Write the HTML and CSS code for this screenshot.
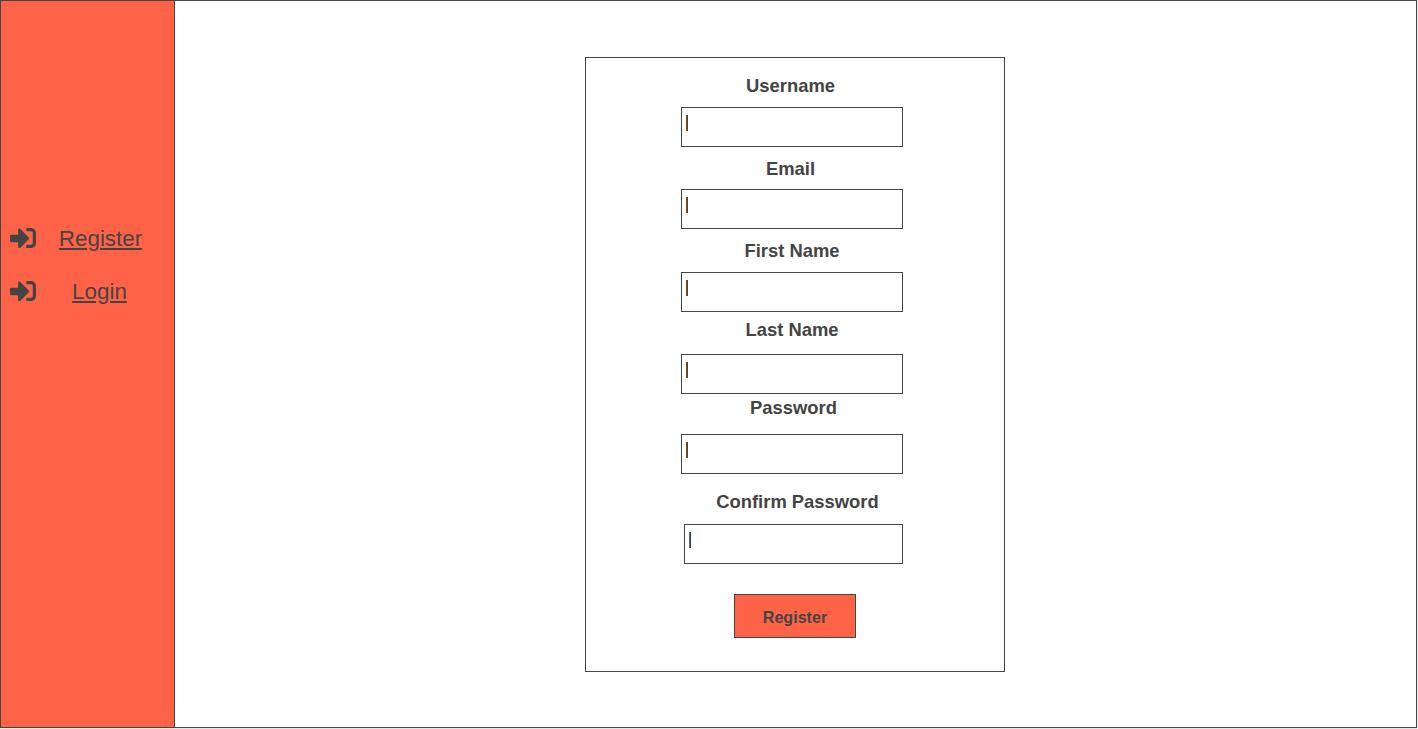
FILE: index.html
```
<!DOCTYPE html>
<html lang="en">
<head>
<meta charset="utf-8">
<title>Register</title>
<link rel="stylesheet" href="styles.css">
</head>
<body>
<svg class="sprite" aria-hidden="true">
  <symbol id="sign-in" viewBox="0 64 512 384" preserveAspectRatio="none"><path d="M416 448h-84c-6.600 0-12-5.400-12-12v-40c0-6.600 5.400-12 12-12h84c17.700 0 32-14.300 32-32V160c0-17.700-14.300-32-32-32h-84c-6.600 0-12-5.400-12-12V76c0-6.600 5.400-12 12-12h84c53 0 96 43 96 96v192c0 53-43 96-96 96zm-47-201L201 79c-15-15-41-4.500-41 17v96H24c-13.300 0-24 10.700-24 24v96c0 13.300 10.700 24 24 24h136v96c0 21.500 26 32 41 17l168-168c9.300-9.400 9.300-24.600 0-34z"/></symbol>
</svg>
<div class="frame">
  <nav class="sidebar">
    <div class="nav-item"><svg class="icon"><use href="#sign-in"/></svg><a class="link" href="#">Register</a></div>
    <div class="nav-item login"><svg class="icon"><use href="#sign-in"/></svg><a class="link" href="#">Login</a></div>
  </nav>
  <main class="content">
    <form class="card">
      <div class="field username"><label class="label">Username</label><div class="input"><span class="caret"></span></div></div>
      <div class="field email"><label class="label">Email</label><div class="input"><span class="caret"></span></div></div>
      <div class="field first-name"><label class="label">First Name</label><div class="input"><span class="caret"></span></div></div>
      <div class="field last-name"><label class="label">Last Name</label><div class="input"><span class="caret"></span></div></div>
      <div class="field password"><label class="label">Password</label><div class="input"><span class="caret"></span></div></div>
      <div class="field confirm"><label class="label">Confirm Password</label><div class="input"><span class="caret"></span></div></div>
      <button class="submit" type="button">Register</button>
    </form>
  </main>
</div>
</body>
</html>
```
FILE: styles.css
```
* { box-sizing: border-box; }
body {
  margin: 0;
  height: 729px;
  overflow: hidden;
  background: #fff;
  color: #444;
  font-family: "Liberation Sans", Arial, sans-serif;
}
.sprite { display: none; }
.frame {
  display: flex;
  width: 1417px;
  height: 728px;
  border: 1px solid #444;
  box-shadow: 0 1px 0 #e6e6e6, 1px 0 0 #f0f0f0;
}
.sidebar {
  width: 174px;
  padding-top: 211px;
  border-right: 1px solid #444;
  background: #ff6347;
}
.nav-item {
  display: flex;
  align-items: center;
  height: 53px;
  padding-left: 9px;
}
.icon { width: 26px; height: 20px; margin-bottom: 1px; fill: #444; }
.link {
  width: 129px;
  color: #444;
  font-size: 22.4px;
  line-height: 26px;
  text-align: center;
}
.login .link { width: 127px; }
.content { flex: 1; padding: 56px 0 0 410px; }
.card {
  width: 420px;
  height: 615px;
  padding: 17px 101px 0 95px;
  border: 1px solid #444;
}
.field { display: flex; flex-direction: column; align-items: flex-end; }
.label {
  align-self: center;
  font-size: 18.4px;
  font-weight: bold;
  line-height: 22px;
  white-space: nowrap;
}
.input {
  width: 222px;
  height: 40px;
  padding: 7px 4px;
  border: 1px solid #444;
}
.caret {
  display: block;
  width: 2px;
  height: 16px;
  background: linear-gradient(90deg, #a04a00 50%, #444 50%);
}
.username { gap: 10px; }
.username .label, .email .label { margin-right: 3px; }
.email { margin-top: 11px; gap: 9px; }
.first-name { margin-top: 11px; gap: 10px; }
.last-name { margin-top: 7px; gap: 13px; }
.password { margin-top: 3px; gap: 15px; }
.password .label { margin-left: 3px; }
.confirm { margin-top: 17px; gap: 11px; }
.confirm .label { margin-left: 11px; }
.confirm .input { width: 219px; }
.confirm .caret { background: linear-gradient(90deg, #8a6238 50%, #004a9f 50%); }
.submit {
  display: block;
  width: 122px;
  height: 44px;
  margin: 30px 0 0 53px;
  padding: 3px 0 0;
  border: 1px solid #444;
  background: #ff6347;
  color: #444;
  font: bold 16.100px "Liberation Sans", Arial, sans-serif;
}
```
